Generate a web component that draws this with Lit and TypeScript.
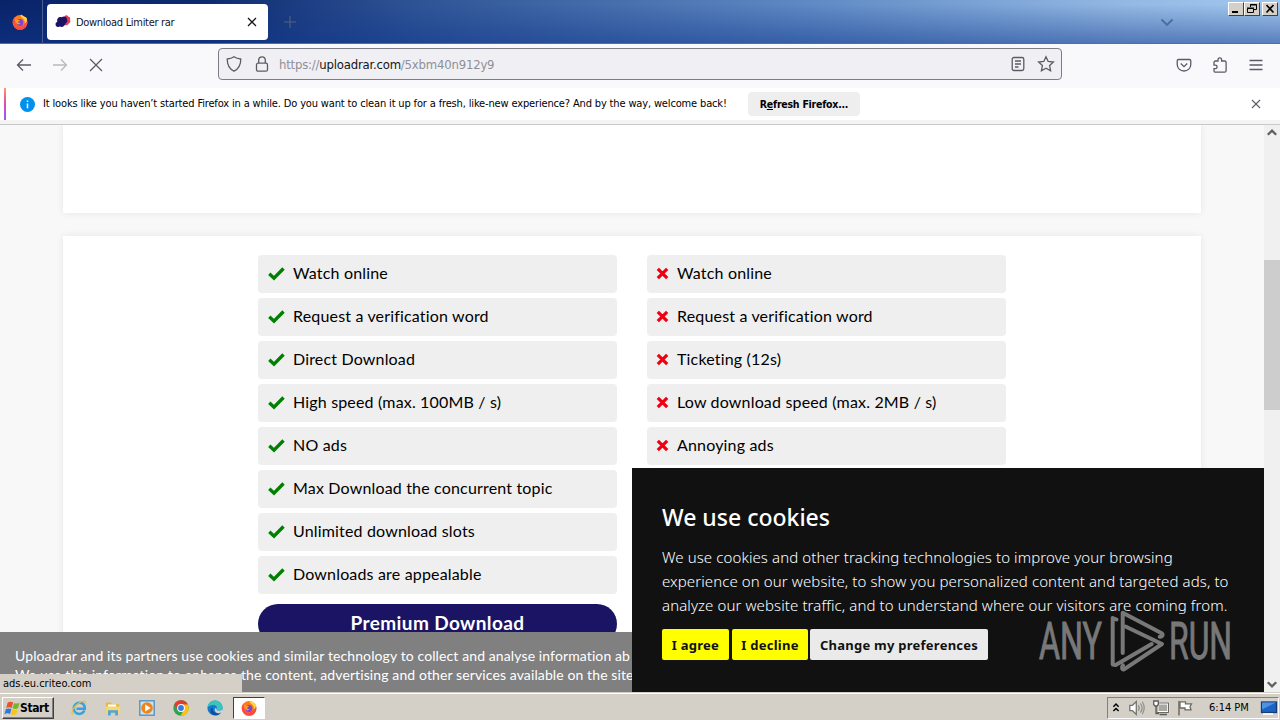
import { LitElement, html, svg, css } from "lit";
import { customElement, property } from "lit/decorators.js";

const PREMIUM = [
  "Watch online",
  "Request a verification word",
  "Direct Download",
  "High speed (max. 100MB / s)",
  "NO ads",
  "Max Download the concurrent topic",
  "Unlimited download slots",
  "Downloads are appealable",
];

const FREE = [
  "Watch online",
  "Request a verification word",
  "Ticketing (12s)",
  "Low download speed (max. 2MB / s)",
  "Annoying ads",
];

const firefox = svg`
  <circle cx="8" cy="8.4" r="7.4" fill="#ff7a1f" />
  <path d="M1 7c-.6 4 2.400 8.600 7 8.800 4 0 7.400-3 7.400-7.200C15.400 6 14 3.500 11.500 2.500c1.500 2 1.800 3.500 1.500 5.500-.5 3-3 4.600-5.500 4.400C4.500 12.200 3 10 3.200 7 2.500 6.500 2.200 5 2.500 3.500 1.500 4.500 1.100 6 1 7z" fill="#fb4b45" />
  <path d="M9 .2c-.8 2 .2 3 2 4.300 1.600 1.200 2.200 3 1.700 5 2-1 2.700-3.500 2-5.500C13.500 2.500 12.500 3 12 2.500 11 1.800 9.500 1.500 9 .2z" fill="#ffd83d" />
  <circle cx="7.800" cy="8.600" r="3.500" fill="#7b43d6" />
  <path d="M3 5.500c2-.8 3 .4 5 .6 0 1-1.700 1-1.800 2 0 1 1.200 1.500 2.700 1-.9 1.700-3.400 1.800-4.500.2C3.700 8 3.300 7 3 5.500z" fill="#ff9a26" />`;

const ICONS: Record<string, unknown> = {
  firefox,
  cloud: svg`
    <path d="M9.500 2.200c1.500-1.700 3.400-.6 3.600.3 2 .2 2.600 1.800 1.900 3.200.8 1.600.2 3.200-1.200 3.700-.8 1.700-2.400 2.300-4 1.800z" fill="#f0384f" />
    <path d="M.6 11C.2 9.200 1.400 8 2.300 7.700 1.500 4.500 4 2.500 6.500 3.200 8.700 1.700 11.800 2.400 11.700 4.700c1.300 1.700.6 3.900-1 4.500-.9 3-3.500 4.500-5.900 3.400C3.300 13.600 1.200 13 .6 11z" fill="#1a1466" />`,
  close: svg`<path d="M4 4l8 8m0-8l-8 8" />`,
  stop: svg`<path d="M2 2l12 12M14 2L2 14" />`,
  plus: svg`<path d="M8 2v12M2 8h12" />`,
  back: svg`<path d="M15 8H1.500M7 2.500L1.500 8 7 13.500" />`,
  forward: svg`<path d="M1 8h13.500M9 2.500L14.500 8 9 13.500" />`,
  chevron: svg`<path d="M2.500 5.500L8 11l5.500-5.500" />`,
  shield: svg`<path d="M8 .8c2 1.400 4.300 2 6.800 2.200 0 5.500-1.500 9.700-6.800 12.200C2.700 12.700 1.200 8.500 1.200 3 3.700 2.800 6 2.200 8 .8z" />`,
  lock: svg`<rect x="2.500" y="7.200" width="11" height="8" rx="1.500" /><path d="M4.700 7V4.200C4.700 2 6 .8 8 .8s3.300 1.200 3.300 3.400V7" />`,
  reader: svg`<rect x="2.200" y="1.500" width="11.600" height="13" rx="1.800" /><path d="M5 5h6M5 8h6M5 11h3.500" />`,
  star: svg`<path d="M8 .8l2.200 4.700 5.200.6-3.800 3.500 1 5.200L8 12.200l-4.600 2.600 1-5.200L.6 6.100l5.200-.6z" />`,
  pocket: svg`<path d="M2.600 2.500h10.800c.8 0 1.400.6 1.400 1.400v3.300c0 4-3 6.800-6.800 6.800S1.200 11.200 1.200 7.200V3.900c0-.8.6-1.400 1.400-1.400z" /><path d="M4.800 6.500L8 9.600l3.200-3.100" />`,
  puzzle: svg`<path d="M2 8.200V5.500C2 4.700 2.600 4 3.500 4H6V2.700C6 1.600 6.800.8 7.800.8s1.800.8 1.800 1.900V4h3c.9 0 1.500.7 1.500 1.500v8.200c0 .9-.6 1.500-1.500 1.500H3.500c-.9 0-1.500-.6-1.500-1.500v-2h1.400c1 0 1.700-.8 1.700-1.700s-.7-1.800-1.700-1.800z" />`,
  menu: svg`<path d="M1.500 3.500h13M1.500 8h13M1.500 12.500h13" />`,
  check: svg`<path d="M1.300 8.800l4.700 4.400L15.500 3.500" stroke="#008000" stroke-width="3.400" />`,
  cross: svg`<path d="M3 3l10 10M13 3L3 13" stroke="#ee0011" stroke-width="3.400" />`,
  info: svg`<circle cx="8" cy="8" r="8" fill="#0090ed" /><path d="M8 7v5M8 3.800v1.400" stroke="#fff" stroke-width="1.600" />`,
  up: svg`<path d="M3.800 9.800L8 5.600l4.200 4.200" stroke-width="2.300" />`,
  down: svg`<path d="M3.800 6.200L8 10.400l4.200-4.200" stroke-width="2.300" />`,
  flag: svg`
    <path d="M.4 14.200C2.400 13 4.200 13.200 6 14L7.400 8.900C5.700 8.200 4 8.200 1.900 9z" fill="#3177d6" />
    <path d="M2.200 8C4.200 7.100 6 7.200 7.700 7.900L9.200 2.300C7.400 1.500 5.700 1.500 3.700 2.500z" fill="#e7532a" />
    <path d="M8.500 8.300c1.700.8 3.500.8 5.500 0L15.600 2.800c-1.900.9-3.600.9-5.500.1z" fill="#73b62d" />
    <path d="M6.800 14.500c1.700.8 3.500.7 5.400-.2L13.700 9.200c-1.900.8-3.700.8-5.500.1z" fill="#f7c51d" />`,
  ie: svg`
    <path d="M13.400 10.600c-.9 2-2.700 3.300-5 3.300-3.200 0-5.600-2.400-5.600-5.600s2.400-5.500 5.600-5.500c3.300 0 5.400 2.300 5.400 6H5.500" stroke="#35a3df" stroke-width="2.500" />
    <path d="M2 14.500C-.5 13 2.500 6.500 8 3c3.500-2.200 7-2.600 6.700.2" stroke="#e6bd45" stroke-width="1.300" />`,
  folder: svg`
    <path d="M.8 2.500h5l1.300 1.700h7.100v9H.8z" fill="#e3b94a" /><path d="M3 4.500h8v6H3z" fill="#fff" />
    <path d="M.8 6.500h14.400v7H.8z" fill="#f3d778" /><path d="M3 15.500V10.300h10v5.200h-2.800v-2.700H5.800v2.700z" fill="#4fa5d4" />`,
  player: svg`
    <rect x=".8" y=".8" width="14.400" height="14.400" fill="#c9e2f4" stroke="#4d8dc0" />
    <circle cx="8" cy="8" r="5.800" fill="#ef8418" /><path d="M6.200 4.600v6.800L11.700 8z" fill="#fff" />`,
  chrome: svg`
    <circle cx="8" cy="8" r="7.700" fill="#2fa34f" />
    <path d="M8 8L1.300 4.200A7.700 7.700 0 0 1 14.900 4.500z" fill="#e33b2e" /><path d="M1.300 4.200L5 10.500 8 4.500z" fill="#e33b2e" />
    <path d="M8 4.500h6.900A7.700 7.700 0 0 1 7.600 15.700L11.300 9z" fill="#fbc116" />
    <circle cx="8" cy="8" r="3.900" fill="#fff" /><circle cx="8" cy="8" r="2.900" fill="#3b78e7" />`,
  edge: svg`
    <circle cx="8" cy="8" r="7.600" fill="#1579cf" />
    <path d="M.5 7.300C1 3 4.200.4 8 .4c4.500 0 7.600 3.200 7.600 6.400 0 2.700-2 3.900-4 3.900-1.600 0-2.400-.6-1.900-1.400C10.800 7 8.800 5 6.200 5 3.500 5 1.500 6 .5 7.300z" fill="#39c5bd" />
    <path d="M6.200 7.500C4.700 11 7.800 14.500 13.500 13.200 10 17 3.800 15.600 3.400 10.700 3.400 9 4.500 7.800 6.200 7.500z" fill="#0c4f9e" />
    <path d="M9.700 9.300c-.5.800.3 1.400 1.900 1.400 1.300 0 2.600-.5 3.400-1.500l1 2.500-4 1.500C8.500 13.200 7 10.500 8 8.200 9 8 9.700 8.700 9.700 9.300z" fill="#d5d1c9" />`,
  tray: svg`<path d="M5 6.500L8 3.500l3 3M5 11.500l3-3 3 3" stroke-width="1.700" />`,
  speaker: svg`
    <path d="M.8 5.300h2.700L7.300 1.500v13L3.500 10.700H.8z" fill="#fff" stroke="#76746f" />
    <path d="M9.300 5.300c1.200 1.600 1.200 3.800 0 5.400M11.400 3.500c2 2.600 2 6.400 0 9M13.300 1.800c2.500 3.600 2.500 8.800 0 12.400" stroke="#8a8883" stroke-width="1.100" />`,
  network: svg`
    <rect x="4.500" y="3.500" width="10.700" height="8.500" fill="#aaa8a3" stroke="#fff" stroke-width="2" /><rect x="4" y="3" width="11.500" height="9.500" stroke="#5d5b57" stroke-width=".9" />
    <path d="M6.500 14.500h7.500" stroke="#5d5b57" stroke-width="1.500" />
    <path d="M.7 1h4.600v3.500L4 6H2L.7 4.500z" fill="#fff" stroke="#5d5b57" /><path d="M3 6v7.500h3" stroke="#5d5b57" />`,
  pennant: svg`<path d="M2 15.500V1" stroke="#6c6a66" stroke-width="1.500" /><path d="M3 1.800h5.500v2h6l-1.500 3 1 3H8V8H3z" fill="#fff" stroke="#6c6a66" />`,
  desktop: svg`
    <rect x=".5" y="2" width="15" height="10.500" fill="#1b63c4" stroke="#173c75" /><path d="M1 2.500h14L1 9.500z" fill="#4d93e4" />
    <path d="M2 14h10" stroke="#fff" stroke-width="1.500" />`,
};

@customElement("ui-icon")
class UiIcon extends LitElement {
  @property() name = "";

  static styles = css`
    :host {
      display: block;
      flex: none;
      width: 16px;
      height: 16px;
    }
    svg {
      display: block;
      width: 100%;
      height: 100%;
      overflow: visible;
    }
    .glyph {
      fill: none;
      stroke: currentColor;
      stroke-width: var(--stroke, 1.3);
    }
    .glyph [fill]:not([stroke]) {
      stroke: none;
    }
  `;

  render() {
    return html`<svg viewBox="0 0 16 16"><g class="glyph">${ICONS[this.name]}</g></svg>`;
  }
}

@customElement("browser-chrome")
class BrowserChrome extends LitElement {
  static styles = css`
    :host {
      display: block;
      height: 125px;
      font: 11px "DejaVu Sans Condensed", "Noto Sans", sans-serif;
      color: #15141a;
    }
    .tabs {
      position: relative;
      display: flex;
      align-items: center;
      box-sizing: border-box;
      height: 44px;
      background:
        linear-gradient(to bottom, transparent 10%, rgba(16, 56, 140, 0.5) 100%),
        linear-gradient(to right, #0a246a 0, #0d2a70 200px, #2f5496 420px, #5d88c3 800px, #94b9e4 1130px, #a2c7ee 1280px);
      border-bottom: 1px solid #5c6b92;
    }
    .pinned {
      box-sizing: border-box;
      width: 43px;
      height: 44px;
      padding: 14px 0 0 12px;
      border-right: 1px solid #4a5e93;
    }
    .tab {
      display: flex;
      align-items: center;
      box-sizing: border-box;
      width: 221px;
      height: 36px;
      margin-left: 4px;
      padding: 0 8px;
      border-radius: 4px;
      background: #fff;
    }
    .title {
      flex: 1;
      padding: 2px 0 0 5px;
      letter-spacing: -0.3px;
    }
    .add {
      margin-left: 14px;
      color: #54657f;
      --stroke: 1;
    }
    .list-tabs {
      margin-left: auto;
      margin-right: 105px;
      color: #4d6d9c;
      --stroke: 1.8;
    }
    .window {
      position: absolute;
      top: 2px;
      right: 2px;
      display: flex;
    }
    .window svg {
      width: 14px;
      height: 12px;
      background: #d4d0c8;
      border: 1px solid;
      border-color: #fff #404040 #404040 #fff;
      fill: none;
      stroke: #000;
    }
    .window .x {
      margin-left: 2px;
    }
    .toolbar {
      display: flex;
      align-items: center;
      height: 44px;
      padding: 0 16px;
      background: #f9f9fb;
      color: #5b5b66;
    }
    .nav {
      display: flex;
      gap: 20px;
      width: 202px;
    }
    .off {
      opacity: 0.4;
    }
    .url {
      display: flex;
      align-items: center;
      box-sizing: border-box;
      width: 844px;
      height: 32px;
      margin-top: -4px;
      padding: 0 7px;
      gap: 12px;
      border: 1px solid #7c7c84;
      border-radius: 4px;
      background: #f0f0f4;
    }
    .nav,
    .menu {
      margin-top: -2px;
    }
    .address {
      flex: 1;
      margin-left: -3px;
      padding-top: 1px;
      font-size: 13px;
      letter-spacing: -0.2px;
      color: #8f8f96;
    }
    .address b {
      font-weight: normal;
      color: #15141a;
    }
    .menu {
      display: flex;
      gap: 20px;
      margin-left: auto;
    }
    .notice {
      display: flex;
      align-items: center;
      box-sizing: border-box;
      height: 32px;
      padding: 0 16px;
      background: #fff;
      position: relative;
    }
    .notice::before {
      content: "";
      position: absolute;
      left: 4px;
      top: 0;
      width: 2px;
      height: 32px;
      background: linear-gradient(#ff9868, #e84ba0 45%, #9059ff);
    }
    .message {
      margin-left: 8px;
      margin-top: -2px;
      width: 705px;
      white-space: nowrap;
      letter-spacing: -0.15px;
      color: #000;
    }
    .refresh {
      box-sizing: border-box;
      width: 112px;
      height: 24px;
      border-radius: 4px;
      background: #eeeeef;
      text-align: center;
      font: bold 10.5px/25px "DejaVu Sans Condensed", sans-serif;
      letter-spacing: -0.24px;
      color: #000;
    }
    .info {
      margin-left: 4px;
      width: 15px;
      height: 15px;
    }
    .dismiss {
      margin-left: auto;
      color: #5b5b66;
      --stroke: 1.1;
    }
    .edge {
      box-sizing: border-box;
      height: 5px;
      background: #f4f4f5;
      border-bottom: 1px solid #c8c8cb;
    }
  `;

  render() {
    return html`
      <div class="tabs">
        <div class="pinned"><ui-icon name="firefox"></ui-icon></div>
        <div class="tab">
          <ui-icon name="cloud"></ui-icon>
          <span class="title">Download Limiter rar</span>
          <ui-icon name="close"></ui-icon>
        </div>
        <ui-icon class="add" name="plus"></ui-icon>
        <ui-icon class="list-tabs" name="chevron"></ui-icon>
        <div class="window">
          <svg viewBox="0 0 14 12"><path d="M3 9h6" stroke-width="2" /></svg>
          <svg viewBox="0 0 14 12"><path d="M5.500 4V1.500h6v5H9M5 2h7M2.500 5.500h6v4h-6zM2 5h7" /></svg>
          <svg class="x" viewBox="0 0 14 12"><path d="M3.500 2l7 7.500m0-7.500l-7 7.500" stroke-width="1.700" /></svg>
        </div>
      </div>
      <div class="toolbar">
        <div class="nav">
          <ui-icon name="back"></ui-icon>
          <ui-icon class="off" name="forward"></ui-icon>
          <ui-icon name="stop"></ui-icon>
        </div>
        <div class="url">
          <ui-icon name="shield"></ui-icon>
          <ui-icon name="lock"></ui-icon>
          <span class="address">https://<b>uploadrar.com</b>/5xbm40n912y9</span>
          <ui-icon name="reader"></ui-icon>
          <ui-icon name="star"></ui-icon>
        </div>
        <div class="menu">
          <ui-icon name="pocket"></ui-icon>
          <ui-icon name="puzzle"></ui-icon>
          <ui-icon name="menu"></ui-icon>
        </div>
      </div>
      <div class="notice">
        <ui-icon class="info" name="info"></ui-icon>
        <span class="message"
          >It looks like you haven’t started Firefox in a while. Do you want to clean it up for a fresh, like-new
          experience? And by the way, welcome back!</span
        >
        <div class="refresh">R<u>e</u>fresh Firefox...</div>
        <ui-icon class="dismiss" name="close"></ui-icon>
      </div>
      <div class="edge"></div>
    `;
  }
}

@customElement("feature-list")
class FeatureList extends LitElement {
  @property() icon = "check";
  @property({ attribute: false }) items: string[] = [];

  static styles = css`
    :host {
      display: flex;
      flex-direction: column;
      gap: 5px;
      width: 359px;
      letter-spacing: 0.17px;
    }
    .row {
      display: flex;
      align-items: center;
      box-sizing: border-box;
      height: 38px;
      padding: 0 0 3px 10px;
      border-radius: 4px;
      background: #efefef;
      white-space: nowrap;
    }
    .check {
      margin-right: 9px;
    }
    .cross {
      width: 15px;
      height: 15px;
      margin: 1px 7px 0 -2px;
    }
  `;

  render() {
    return this.items.map(
      (item) => html`
        <div class="row"><ui-icon class=${this.icon} name=${this.icon}></ui-icon><span>${item}</span></div>
      `
    );
  }
}

@customElement("task-bar")
class TaskBar extends LitElement {
  static styles = css`
    :host {
      display: flex;
      align-items: center;
      box-sizing: border-box;
      height: 28px;
      padding: 2px 1px 0 2px;
      background: #d4d0c8;
      border-top: 1px solid #d4d0c8;
      box-shadow: inset 0 1px #fff;
      font: 11px "DejaVu Sans Condensed", sans-serif;
      color: #000;
    }
    .start {
      display: flex;
      align-items: center;
      box-sizing: border-box;
      width: 52px;
      height: 22px;
      padding-left: 1px;
      border: 1px solid;
      border-color: #fff #404040 #404040 #fff;
      box-shadow: inset -1px -1px #808080;
      font-weight: bold;
      font-size: 12px;
      letter-spacing: -0.4px;
    }
    .apps {
      display: flex;
      align-items: center;
      gap: 18px;
      margin-left: 17px;
    }
    .active {
      box-sizing: border-box;
      display: flex;
      justify-content: center;
      align-items: center;
      width: 32px;
      height: 22px;
      margin-left: -8px;
      background: #fff;
      border: 1px solid;
      border-color: #404040 #fff #fff #404040;
    }
    .tray {
      display: flex;
      align-items: center;
      box-sizing: border-box;
      width: 172px;
      height: 22px;
      margin-left: auto;
      padding: 0 1px;
      border: 1px solid;
      border-color: #808080 #fff #fff #808080;
    }
    .speaker {
      margin-left: 6px;
    }
    .network,
    .pennant {
      margin-left: 8px;
    }
    .time {
      margin-left: 16px;
      flex: 1;
      white-space: nowrap;
    }
    .tray-arrow {
      width: 14px;
    }
  `;

  render() {
    return html`
      <div class="start"><ui-icon name="flag"></ui-icon>Start</div>
      <div class="apps">
        ${["ie", "folder", "player", "chrome", "edge"].map((name) => html`<ui-icon name=${name}></ui-icon>`)}
        <div class="active"><ui-icon name="firefox"></ui-icon></div>
      </div>
      <div class="tray">
        <ui-icon class="tray-arrow" name="tray"></ui-icon>
        <ui-icon class="speaker" name="speaker"></ui-icon>
        <ui-icon class="network" name="network"></ui-icon>
        <ui-icon class="pennant" name="pennant"></ui-icon>
        <span class="time">6:14 PM</span>
        <ui-icon name="desktop"></ui-icon>
      </div>
    `;
  }
}

@customElement("app-root")
class AppRoot extends LitElement {
  static styles = css`
    :host {
      display: flex;
      flex-direction: column;
      position: relative;
      width: 1280px;
      height: 720px;
      overflow: hidden;
    }
    .view {
      position: relative;
      display: flex;
      height: 567px;
      overflow: hidden;
    }
    .page {
      flex: 1;
      padding: 0 63px;
      background: #f8f8f8;
      font: 16px "Lato", sans-serif;
      color: #000;
    }
    .card {
      background: #fff;
      box-shadow: 0 0 7px rgba(0, 0, 0, 0.08);
    }
    .ad {
      height: 88px;
      margin-bottom: 23px;
    }
    .plans {
      display: flex;
      gap: 30px;
      height: 500px;
      padding: 19px 0 0 195px;
    }
    .premium {
      width: 359px;
      height: 40px;
      margin-top: 10px;
      border-radius: 20px;
      background: #1b1464;
      color: #fff;
      text-align: center;
      font: bold 19px/38px "Lato", sans-serif;
      letter-spacing: 0.4px;
    }
    .scroll {
      display: flex;
      flex-direction: column;
      width: 16px;
      background: #f0f0f0;
      color: #606060;
    }
    .thumb {
      height: 150px;
      margin: 119px 0 auto;
      background: #cdcdcd;
    }
    .consent {
      position: absolute;
      left: 0;
      bottom: 0;
      box-sizing: border-box;
      width: 632px;
      height: 60px;
      padding: 14px 0 0 15px;
      overflow: hidden;
      white-space: nowrap;
      background: #808080;
      color: #fff;
      font: 14px/19px "Lato", sans-serif;
      letter-spacing: 0.11px;
    }
    .status {
      position: absolute;
      left: 0;
      bottom: 0;
      box-sizing: border-box;
      width: 242px;
      height: 18px;
      padding-left: 3px;
      background: #d4d0c8;
      font: 11px/20px "DejaVu Sans Condensed", sans-serif;
      color: #000;
    }
    .cookies {
      position: absolute;
      right: 16px;
      bottom: 0;
      box-sizing: border-box;
      width: 632px;
      height: 224px;
      padding: 30px;
      background: #111;
      color: #fff;
      font: 15px/24px "Noto Sans", sans-serif;
    }
    .cookies h1 {
      margin: 0;
      height: 47px;
      font: 500 23px/39px "Noto Sans", sans-serif;
    }
    .cookies p {
      margin: 0 0 12px;
      height: 72px;
      white-space: nowrap;
      font-weight: 300;
      letter-spacing: 0.1px;
    }
    .buttons {
      display: flex;
      gap: 3px;
    }
    .button {
      height: 31px;
      border-radius: 2px;
      background: #ff0;
      color: #111;
      text-align: center;
      font: bold 13px/32px "Noto Sans", sans-serif;
      letter-spacing: 0.25px;
    }
    .agree {
      width: 67px;
    }
    .decline {
      width: 76px;
    }
    .change {
      width: 178px;
      margin-left: -1px;
      background: #eaeaea;
    }
    .mark {
      position: absolute;
      left: 1036px;
      top: 606px;
      width: 200px;
      height: 70px;
      opacity: 0.6;
      overflow: visible;
      fill: #bdbdbd;
      stroke: #bdbdbd;
      font: 52px "Roboto", sans-serif;
    }
    .mark path {
      fill: none;
      stroke-width: 4;
      stroke-linejoin: round;
      stroke-linecap: round;
    }
  `;

  render() {
    return html`
      <browser-chrome></browser-chrome>
      <div class="view">
        <div class="page">
          <div class="card ad"></div>
          <div class="card plans">
            <div>
              <feature-list icon="check" .items=${PREMIUM}></feature-list>
              <div class="premium">Premium Download</div>
            </div>
            <feature-list icon="cross" .items=${FREE}></feature-list>
          </div>
        </div>
        <div class="scroll">
          <ui-icon name="up"></ui-icon>
          <div class="thumb"></div>
          <ui-icon name="down"></ui-icon>
        </div>
        <div class="consent">
          Uploadrar and its partners use cookies and similar technology to collect and analyse information ab<br />
          We use this information to enhance the content, advertising and other services available on the site
        </div>
        <div class="status">ads.eu.criteo.com</div>
        <div class="cookies">
          <h1>We use cookies</h1>
          <p>
            We use cookies and other tracking technologies to improve your browsing<br />
            experience on our website, to show you personalized content and targeted ads, to<br />
            analyze our website traffic, and to understand where our visitors are coming from.
          </p>
          <div class="buttons">
            <div class="button agree">I agree</div>
            <div class="button decline">I decline</div>
            <div class="button change">Change my preferences</div>
          </div>
        </div>
      </div>
      <task-bar></task-bar>
      <svg class="mark" viewBox="0 0 200 70">
        <text x="3" y="53" textLength="63" lengthAdjust="spacingAndGlyphs">ANY</text>
        <text x="133" y="53" textLength="63" lengthAdjust="spacingAndGlyphs">RUN</text>
        <path
          d="M80.500 13.500L76.700 12v46.500l3 .5 36-21M86.700 47V6.700l39 20.500c2 2 0 4-2 3.500M90 20.700L126 38l-38 25.300c-2 .5-3-2-1-4"
        />
      </svg>
    `;
  }
}
